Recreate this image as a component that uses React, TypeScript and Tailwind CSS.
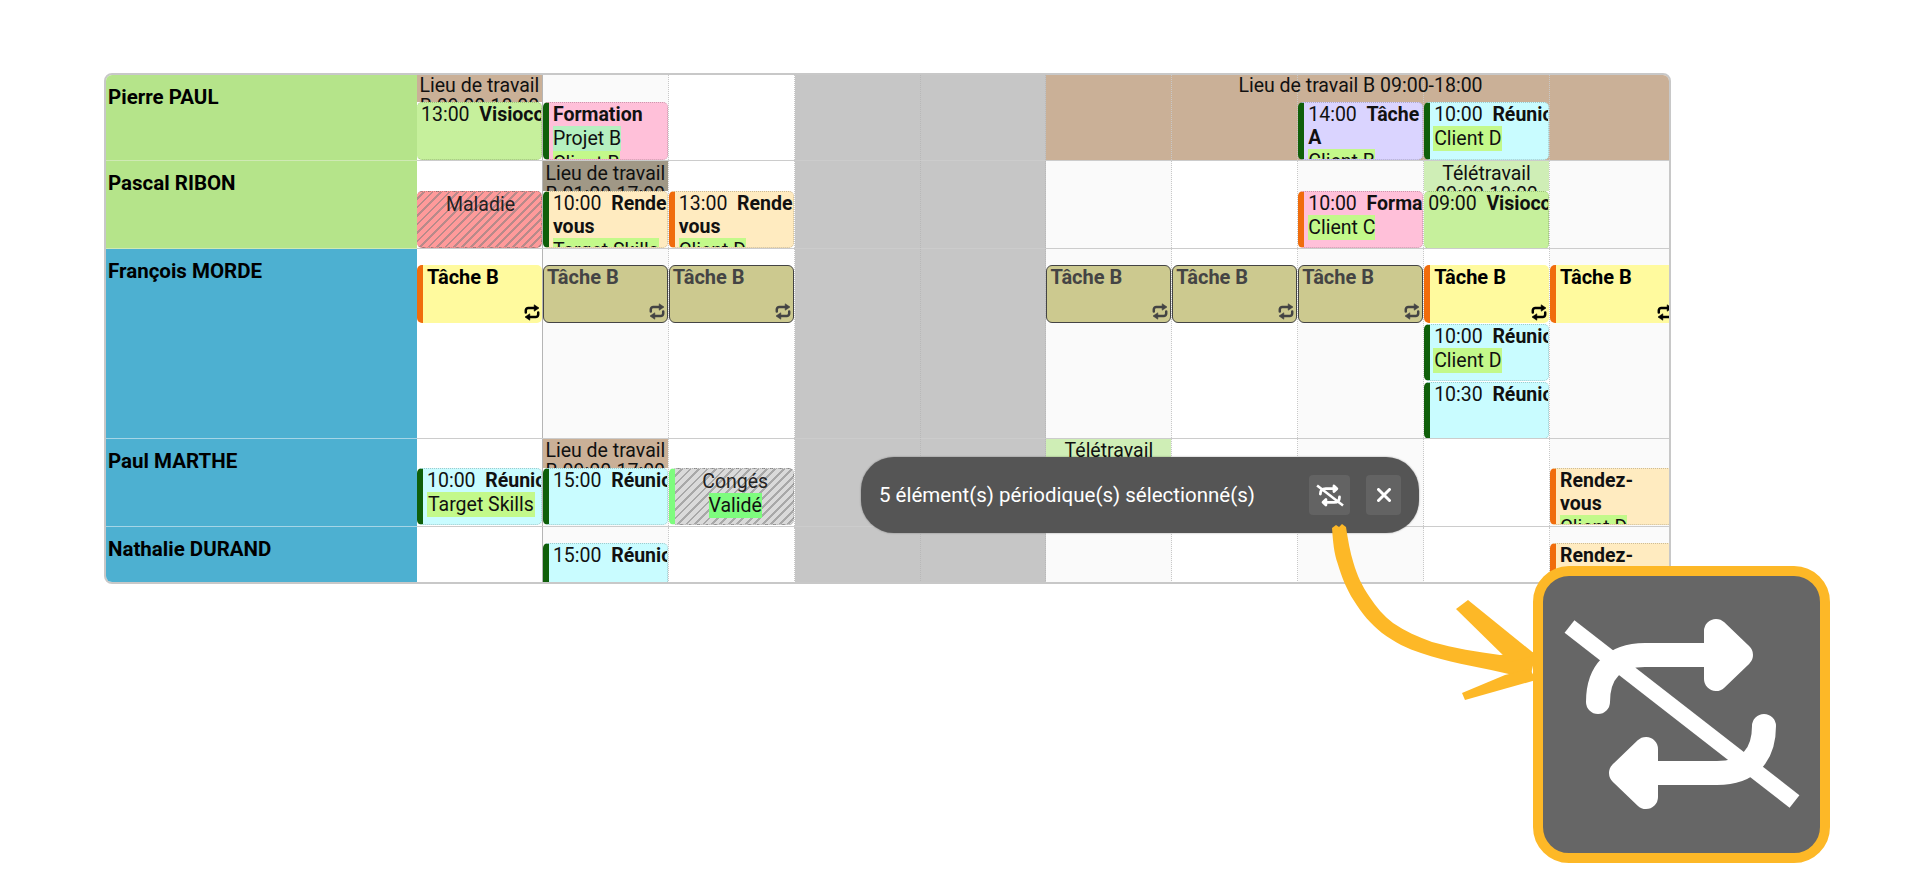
import React from "react";

const C = {
  tan: "bg-[#cab097]",
  green: "bg-[#c6f09c]",
  pink: "bg-[#ffc0d9]",
  lilac: "bg-[#dad4ff]",
  cyan: "bg-[#c9fcff]",
  cream: "bg-[#ffebc0]",
  yellow: "bg-[#fffa9e]",
};

function Tag({ c = "bg-[#c3f98a]", children }: { c?: string; children: React.ReactNode }) {
  return <span className={`inline-block h-[25px] leading-[25px] align-top whitespace-nowrap ${c}`}>{children}</span>;
}

function RepeatSmall({ dim }: { dim?: boolean }) {
  return (
    <svg viewBox="0 0 16 17" className={`absolute right-[2px] bottom-[2px] h-[17px] w-[16px] ${dim ? "text-[#444]" : "text-black"}`} fill="currentColor">
      <path d="M1.8 8.5V6.5A2.5 2.5 0 0 1 4.3 4h6.5" fill="none" stroke="currentColor" strokeWidth="2.5" strokeLinecap="round" />
      <path d="M10.2 .8 15 4l-4.8 3.2z" stroke="currentColor" strokeWidth=".6" strokeLinejoin="round" />
      <path d="M14.2 8.5v2A2.5 2.5 0 0 1 11.7 13H5.2" fill="none" stroke="currentColor" strokeWidth="2.5" strokeLinecap="round" />
      <path d="M5.8 16.2 1 13l4.8-3.2z" stroke="currentColor" strokeWidth=".6" strokeLinejoin="round" />
    </svg>
  );
}

type EvProps = {
  bg: string;
  bar?: "green" | "orange" | "lime";
  h?: string;
  center?: boolean;
  children?: React.ReactNode;
};

function Ev({ bg, bar, h = "h-[57px]", center, children }: EvProps) {
  const b =
    bar === "green"
      ? "border-l-[6px] border-l-[#0f5f0a] pl-[3px]"
      : bar === "orange"
        ? "border-l-[6px] border-l-[#f06c0c] pl-[3px]"
        : bar === "lime"
          ? "border-l-[6px] border-l-[#7efc7e] pl-[3px]"
          : "pl-[3px]";
  return (
    <div
      className={`relative ${h} shrink-0 overflow-hidden rounded-[5px] border-y border-r border-dotted border-y-black/20 border-r-black/20 [border-left-style:solid] ${b} ${bg} ${center ? "text-center" : ""}`}
    >
      {children}
    </div>
  );
}

function TaskB({ selected }: { selected?: boolean }) {
  if (selected) {
    return (
      <div className="relative h-[58px] shrink-0 overflow-hidden rounded-[6px] border-[1.5px] border-[#444] bg-[#ccc98f] pl-[3px] text-[20px] font-bold text-[#444]">
        <div>Tâche B</div>
        <RepeatSmall dim />
      </div>
    );
  }
  return (
    <div className="relative h-[58px] shrink-0 overflow-hidden rounded-[5px] border-l-[6px] border-l-[#f06c0c] bg-[#fffa9e] pl-[4px] text-[20px] font-bold text-black">
      <div className="pt-[1px]">Tâche B</div>
      <RepeatSmall />
    </div>
  );
}

function Band({ h, bg, children }: { h: string; bg: string; children: React.ReactNode }) {
  return <div className={`${h} shrink-0 overflow-hidden text-center leading-[21px] ${bg}`}>{children}</div>;
}

const visio = (t: string) => (
  <Ev bg={C.green} h="h-[58px]">
    <div className="pl-px">{t}{"\u00a0\u00a0"}<b>Visioconférence</b></div>
  </Ev>
);

type CellProps = { alt?: boolean; first?: boolean; bg?: string; top: string; band?: React.ReactNode; children?: React.ReactNode };

function Cell({ alt, first, bg, top, band, children }: CellProps) {
  const base = bg ?? (alt ? "bg-[#fafafa]" : "bg-white");
  const line = first ? "border-r border-r-[#b5b5b5]" : "border-r border-dotted border-r-[#c8c8c8]";
  return (
    <div className={`flex min-w-0 flex-col overflow-hidden ${base} ${line}`}>
      {band ?? <div className={`${top} shrink-0`} />}
      {children}
    </div>
  );
}

function Off() {
  return <div className="border-r border-dotted border-r-[#b8b8b8] bg-[#c6c6c6]" />;
}

function Row({ name, color, line, h, children }: { name: string; color: string; line: string; h: string; children: React.ReactNode }) {
  return (
    <div className={`relative grid ${h} grid-cols-[311px_repeat(10,125.9px)] border-b border-b-[#cccccc] last:border-b-0`}>
      <div className={`${color} ${line} -mb-px border-b pl-[2px] pt-[11px] text-[20.5px] leading-[22px] font-bold text-black`}>{name}</div>
      {children}
    </div>
  );
}

function IconShape({ slashWidth = 16 }: { slashWidth?: number }) {
  return (
    <>
      <g fill="none" stroke="#fff" strokeWidth="24" strokeLinecap="round" strokeLinejoin="round">
        <path d="M1598 702C1598 672 1614 655 1645 655H1710" />
        <path d="M1716 631L1741 655L1716 679Z" fill="#fff" />
        <g transform="rotate(180 1681 714)">
          <path d="M1598 702C1598 672 1614 655 1645 655H1710" />
          <path d="M1716 631L1741 655L1716 679Z" fill="#fff" />
        </g>
      </g>
      <path d="M1569.5 626.5L1794.5 801.5" stroke="#fff" strokeWidth={slashWidth} strokeLinecap="butt" />
    </>
  );
}

function Toolbar() {
  return (
    <div className="absolute left-[861px] top-[457px] flex h-[76px] w-[558px] items-center rounded-[33px] bg-[#555555] pl-[18px] pr-[18px] text-white shadow-[0_0_2px_rgba(0,0,0,0.4)]">
      <span className="flex-1 text-[20.5px] whitespace-nowrap">5 élément(s) périodique(s) sélectionné(s)</span>
      <div className="flex items-center gap-[16px]">
        <button className="flex h-[40px] w-[41px] items-center justify-center rounded-[4px] bg-[#636363]">
          <svg viewBox="1560 615 243 198" className="h-[23px] w-[28px]">
            <IconShape slashWidth={22} />
          </svg>
        </button>
        <button className="flex h-[40px] w-[35px] items-center justify-center rounded-[4px] bg-[#636363]">
          <svg viewBox="0 0 14 14" className="h-[14px] w-[14px]">
            <path d="M1.5 1.5L12.5 12.5M12.5 1.5L1.5 12.5" stroke="#fff" strokeWidth="3" strokeLinecap="round" />
          </svg>
        </button>
      </div>
    </div>
  );
}

function Callout() {
  return (
    <>
      <svg className="pointer-events-none absolute left-0 top-0 h-[894px] w-[1920px]" viewBox="0 0 1920 894">
        <path
          fill="#fdb827"
          d="M1332 528C1333 542 1334 553 1337.5 563C1342 578 1347 590 1353.5 600C1362 614 1371 624 1382 633C1394 642 1408 649 1421 653C1448 662 1473 666 1500 672L1530 679L1536 652L1500 655C1477 652 1454 648 1432 642C1418 637 1405 631 1393 623C1384 616 1376 607 1369.6 597C1362 586 1357 575 1353.5 563C1350 552 1348 540 1346 527L1342 524L1339 527L1336 525Z"
        />
        <path fill="#fdb827" d="M1456 609L1468 600L1536 655L1510 662Z" />
        <path fill="#fdb827" d="M1462 693L1465 700L1536 680L1530 669L1505 675Z" />
      </svg>
      <div className="absolute left-[1533px] top-[566px] h-[297px] w-[297px] rounded-[36px] border-[10px] border-[#fdb827] bg-[#666666]" />
      <svg className="pointer-events-none absolute left-0 top-0 h-[894px] w-[1920px]" viewBox="0 0 1920 894">
        <IconShape />
      </svg>
    </>
  );
}

export default function App() {
  const lieu = "Lieu de travail B 09:00-18:00";
  const lieu17 = "Lieu de travail B 09:00-17:00";
  const green = "bg-[#b5e48a]";
  const blue = "bg-[#4db0d1]";
  const gLine = "border-b-[#cfe9b4]";
  const bLine = "border-b-[#a5d5e6]";
  return (
    <div className="relative h-[894px] w-full overflow-hidden bg-white pl-[104px] pt-[73px] text-[19.5px] leading-[23px] text-[#111] [font-family:Roboto,sans-serif]">
      <div className="h-[511px] w-[1567px] overflow-hidden rounded-[8px] border-2 border-[#c8c8c8]">
        <Row name="Pierre PAUL" color={green} line={gLine} h="h-[86px]">
          <Cell first top="h-[27px]" band={<Band h="h-[27px]" bg={C.tan}>{lieu}</Band>}>{visio("13:00")}</Cell>
          <Cell alt top="h-[27px]">
            <Ev bg={C.pink} bar="green" h="h-[58px]">
              <div className="pl-px"><b>Formation</b></div>
              <div className="pl-px"><Tag c="bg-[#b5f0c0]">Projet B</Tag></div>
              <div className="pl-px"><Tag>Client B</Tag></div>
            </Ev>
          </Cell>
          <Cell top="h-[27px]" />
          <Off />
          <Off />
          <Cell bg={C.tan} top="h-[27px]" />
          <Cell bg={C.tan} top="h-[27px]" />
          <Cell bg={C.tan} top="h-[27px]">
            <Ev bg={C.lilac} bar="green" h="h-[58px]">
              <div className="pl-px">14:00{"\u00a0\u00a0"}<b>Tâche A</b></div>
              <div className="pl-px"><Tag>Client B</Tag></div>
            </Ev>
          </Cell>
          <Cell bg={C.tan} top="h-[27px]">
            <Ev bg={C.cyan} bar="green" h="h-[58px]">
              <div className="pl-px">10:00{"\u00a0\u00a0"}<b>Réunion</b></div>
              <div><Tag><span className="px-px">Client D</span></Tag></div>
            </Ev>
          </Cell>
          <Cell bg={C.tan} top="h-[27px]" />
          <div className="absolute left-[940px] top-0 w-[629px] text-center leading-[21px]">{lieu}</div>
        </Row>

        <Row name="Pascal RIBON" color={green} line={gLine} h="h-[88px]">
          <Cell first top="h-[30px]">
            <Ev bg="bg-[repeating-linear-gradient(135deg,#ff9a9a_0px,#ff9a9a_4px,#b88a8a_4px,#b88a8a_6px)]" center>
              <div className="pt-px text-[#222]">Maladie</div>
            </Ev>
          </Cell>
          <Cell alt top="h-[30px]" band={<Band h="h-[30px] pt-[2px]" bg="bg-[#a09886]">{lieu17.replace("B 09", "B 01")}</Band>}>
            <Ev bg={C.cream} bar="green">
              <div className="pl-px">10:00{"\u00a0\u00a0"}<b>Rendez-vous</b></div>
              <div className="pl-px"><Tag>Target Skills</Tag></div>
            </Ev>
          </Cell>
          <Cell top="h-[30px]">
            <Ev bg={C.cream} bar="orange">
              <div className="pl-px">13:00{"\u00a0\u00a0"}<b>Rendez-vous</b></div>
              <div className="pl-px"><Tag>Client D</Tag></div>
            </Ev>
          </Cell>
          <Off />
          <Off />
          <Cell alt top="h-[30px]" />
          <Cell top="h-[30px]" />
          <Cell alt top="h-[30px]">
            <Ev bg={C.pink} bar="orange">
              <div className="pl-px">10:00{"\u00a0\u00a0"}<b>Formation</b></div>
              <div className="pl-px"><Tag>Client C</Tag></div>
            </Ev>
          </Cell>
          <Cell top="h-[30px]" band={<Band h="h-[30px] pt-[2px]" bg="bg-[#cfeeb6]">Télétravail 09:00-18:00</Band>}>{visio("09:00")}</Cell>
          <Cell alt top="h-[30px]" />
        </Row>

        <Row name="François MORDE" color={blue} line={bLine} h="h-[190px]">
          <Cell first top="h-[16px]"><TaskB /></Cell>
          <Cell alt top="h-[16px]"><TaskB selected /></Cell>
          <Cell top="h-[16px]"><TaskB selected /></Cell>
          <Off />
          <Off />
          <Cell alt top="h-[16px]"><TaskB selected /></Cell>
          <Cell top="h-[16px]"><TaskB selected /></Cell>
          <Cell alt top="h-[16px]"><TaskB selected /></Cell>
          <Cell top="h-[16px]">
            <TaskB />
            <div className="mt-px">
              <Ev bg={C.cyan} bar="green">
                <div className="pl-px">10:00{"\u00a0\u00a0"}<b>Réunion</b></div>
                <div><Tag><span className="px-px">Client D</span></Tag></div>
              </Ev>
            </div>
            <div className="mt-px">
              <Ev bg={C.cyan} bar="green">
                <div className="pl-px">10:30{"\u00a0\u00a0"}<b>Réunion</b></div>
              </Ev>
            </div>
          </Cell>
          <Cell alt top="h-[16px]"><TaskB /></Cell>
        </Row>

        <Row name="Paul MARTHE" color={blue} line={bLine} h="h-[88px]">
          <Cell first top="h-[29px]">
            <Ev bg={C.cyan} bar="green">
              <div className="pl-px">10:00{"\u00a0\u00a0"}<b>Réunion</b></div>
              <div className="pl-px"><Tag><span className="px-px">Target Skills</span></Tag></div>
            </Ev>
          </Cell>
          <Cell alt top="h-[29px]" band={<Band h="h-[29px] pt-px" bg={C.tan}>{lieu17}</Band>}>
            <Ev bg={C.cyan} bar="green">
              <div className="pl-px">15:00{"\u00a0\u00a0"}<b>Réunion</b></div>
            </Ev>
          </Cell>
          <Cell top="h-[29px]">
            <Ev bg="bg-[repeating-linear-gradient(135deg,#dadada_0px,#dadada_4px,#a8a8a8_4px,#a8a8a8_6px)]" bar="lime" center>
              <div className="pt-px text-[#222]">Congés</div>
              <Tag c="bg-[#7efc7e]">Validé</Tag>
            </Ev>
          </Cell>
          <Off />
          <Off />
          <Cell alt top="h-[29px]" band={<Band h="h-[29px] pt-px" bg="bg-[#cfeeb6]">Télétravail 09:00-18:00</Band>} />
          <Cell top="h-[29px]" />
          <Cell alt top="h-[29px]" />
          <Cell top="h-[29px]" />
          <Cell alt top="h-[29px]">
            <Ev bg={C.cream} bar="orange">
              <div className="pl-px"><b>Rendez-vous</b></div>
              <div className="pl-px"><Tag>Client D</Tag></div>
            </Ev>
          </Cell>
        </Row>

        <Row name="Nathalie DURAND" color={blue} line={bLine} h="h-[56px]">
          <Cell first top="h-[16px]" />
          <Cell alt top="h-[16px]">
            <Ev bg={C.cyan} bar="green">
              <div className="pl-px">15:00{"\u00a0\u00a0"}<b>Réunion</b></div>
            </Ev>
          </Cell>
          <Cell top="h-[16px]" />
          <Off />
          <Off />
          <Cell alt top="h-[16px]" />
          <Cell top="h-[16px]" />
          <Cell alt top="h-[16px]" />
          <Cell top="h-[16px]" />
          <Cell alt top="h-[16px]">
            <Ev bg={C.cream} bar="orange">
              <div className="pl-px"><b>Rendez-vous</b></div>
            </Ev>
          </Cell>
        </Row>
      </div>
      <Toolbar />
      <Callout />
    </div>
  );
}
